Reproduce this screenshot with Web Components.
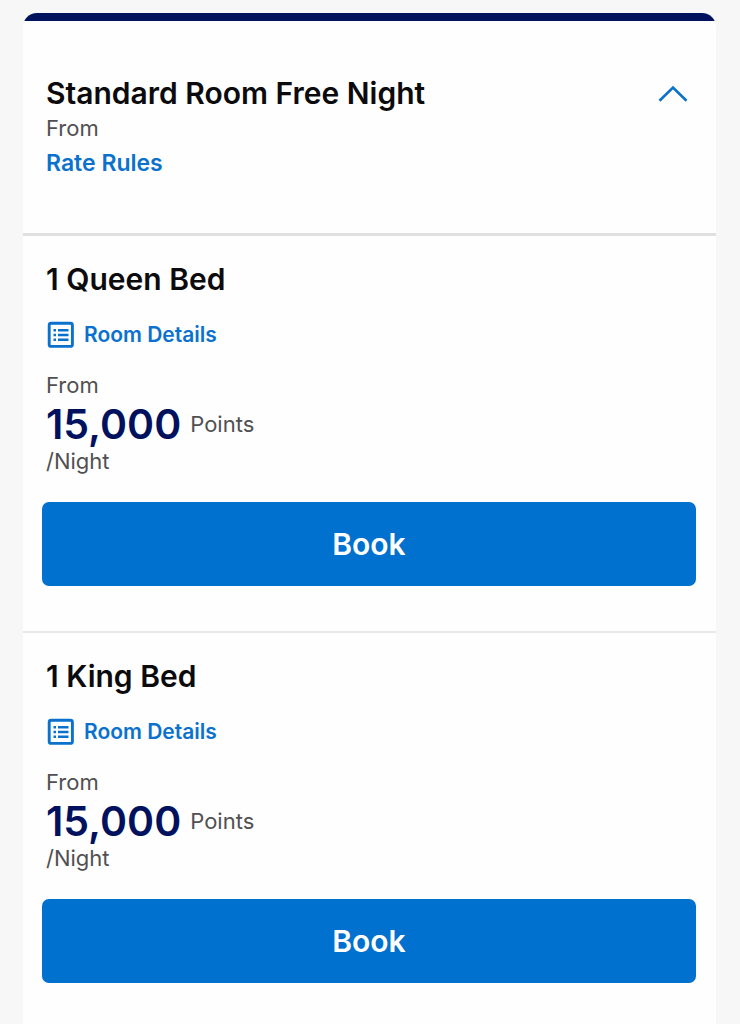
<!DOCTYPE html>
<html lang="en">
<head>
<meta charset="utf-8">
<meta name="viewport" content="width=device-width, initial-scale=1">
<title>Standard Room Free Night</title>
<style>
  body {
    margin: 0;
    background: #f7f7f7;
    color: #0b0b0d;
    font-family: Inter, "Liberation Sans", sans-serif;
    --navy: #00115e;
    --blue: #0071ce;
    --link: #0a72cd;
    --muted: #505052;
  }
</style>
</head>
<body>

<template id="rate-card-template">
  <style>
    :host { display: block; padding: 13px 24px 0 23px; }
    section { background: #fefefe; border-radius: 14px 14px 0 0; overflow: hidden; }
    section::before { content: ""; display: block; height: 8px; background: var(--navy); }
    header {
      display: flex; justify-content: space-between; align-items: flex-start;
      padding: 54px 24px 52px 23px; border-bottom: 3px solid #e0e0e1;
    }
    h2 { margin: 0; font-size: 30px; line-height: 36px; font-weight: 600; }
    p { margin: 0; font-size: 22px; line-height: 34px; color: var(--muted); }
    a { display: block; width: fit-content; font-size: 23px; line-height: 36px; font-weight: 600; color: var(--link); text-decoration: none; }
    button { flex: none; display: flex; align-items: center; height: 36px; margin: 0; padding: 0 4px; border: 0; background: none; cursor: pointer; }
    svg { display: block; }
    button[aria-expanded="false"] svg { transform: rotate(180deg); }
  </style>
  <section>
    <header>
      <div>
        <h2><slot name="title"></slot></h2>
        <p>From</p>
        <a href="#rate-rules">Rate Rules</a>
      </div>
      <button type="button" aria-expanded="true" aria-label="Toggle rooms">
        <svg width="30" height="18" viewBox="0 0 30 18" fill="none" stroke="#0a72cd" stroke-width="2.6" aria-hidden="true">
          <path d="M1.5 16.800 15 3.500l13.500 13.300"/>
        </svg>
      </button>
    </header>
    <div id="rooms"><slot></slot></div>
  </section>
</template>

<template id="room-option-template">
  <style>
    :host { display: block; padding: 25px 20px 45px 19px; border-bottom: 2px solid #e8e8e9; }
    :host(:last-of-type) { padding-bottom: 41px; border-bottom: 0; }
    .info { padding: 0 4px; }
    h3 { margin: 0 0 20px; font-size: 30px; line-height: 36px; font-weight: 600; }
    a { display: flex; align-items: center; gap: 8px; width: fit-content; margin-bottom: 17px; font-size: 21px; line-height: 36px; font-weight: 600; color: var(--link); text-decoration: none; }
    p { margin: 0; font-size: 22px; line-height: 30px; color: var(--muted); }
    .price { display: flex; align-items: center; gap: 9px; line-height: 48px; }
    strong { font-size: 41px; font-weight: 600; color: var(--navy); }
    .unit { line-height: 26px; margin-bottom: 28px; }
    button {
      display: block; width: 100%; height: 84px; margin: 0; padding: 0; border: 0; border-radius: 7px;
      background: var(--blue); color: #fff; font-family: inherit; font-size: 30px; font-weight: 600; cursor: pointer;
    }
  </style>
  <div class="info">
    <h3><slot></slot></h3>
    <a href="#room-details">
      <svg width="30" height="30" viewBox="0 0 30 30" fill="none" stroke="currentColor" aria-hidden="true">
        <rect x="3.200" y="3.200" width="23.200" height="23.200" rx="2" stroke-width="2.900"/>
        <path d="M7.500 10.200h2.500M7.500 15h2.500M7.500 19.800h2.500M12 10.200h10.500M12 15h10.500M12 19.800h10.500" stroke-width="2.500"/>
      </svg>
      Room Details
    </a>
    <p>From</p>
    <p class="price"><strong></strong> <span>Points</span></p>
    <p class="unit">/Night</p>
  </div>
  <button type="button">Book</button>
</template>

<script>
  class RateCard extends HTMLElement {
    connectedCallback() {
      if (this.shadowRoot) return;
      const root = this.attachShadow({ mode: "open" });
      root.append(document.getElementById("rate-card-template").content.cloneNode(true));
      const toggle = root.querySelector("button");
      toggle.addEventListener("click", () => {
        const open = toggle.getAttribute("aria-expanded") === "true";
        toggle.setAttribute("aria-expanded", String(!open));
        root.getElementById("rooms").hidden = open;
      });
    }
  }

  class RoomOption extends HTMLElement {
    connectedCallback() {
      if (this.shadowRoot) return;
      const root = this.attachShadow({ mode: "open" });
      root.append(document.getElementById("room-option-template").content.cloneNode(true));
      root.querySelector("strong").textContent = this.getAttribute("points");
    }
  }

  customElements.define("rate-card", RateCard);
  customElements.define("room-option", RoomOption);
</script>

<main>
  <rate-card>
    <span slot="title">Standard Room Free Night</span>
    <room-option points="15,000">1 Queen Bed</room-option>
    <room-option points="15,000">1 King Bed</room-option>
  </rate-card>
</main>
</body>
</html>
